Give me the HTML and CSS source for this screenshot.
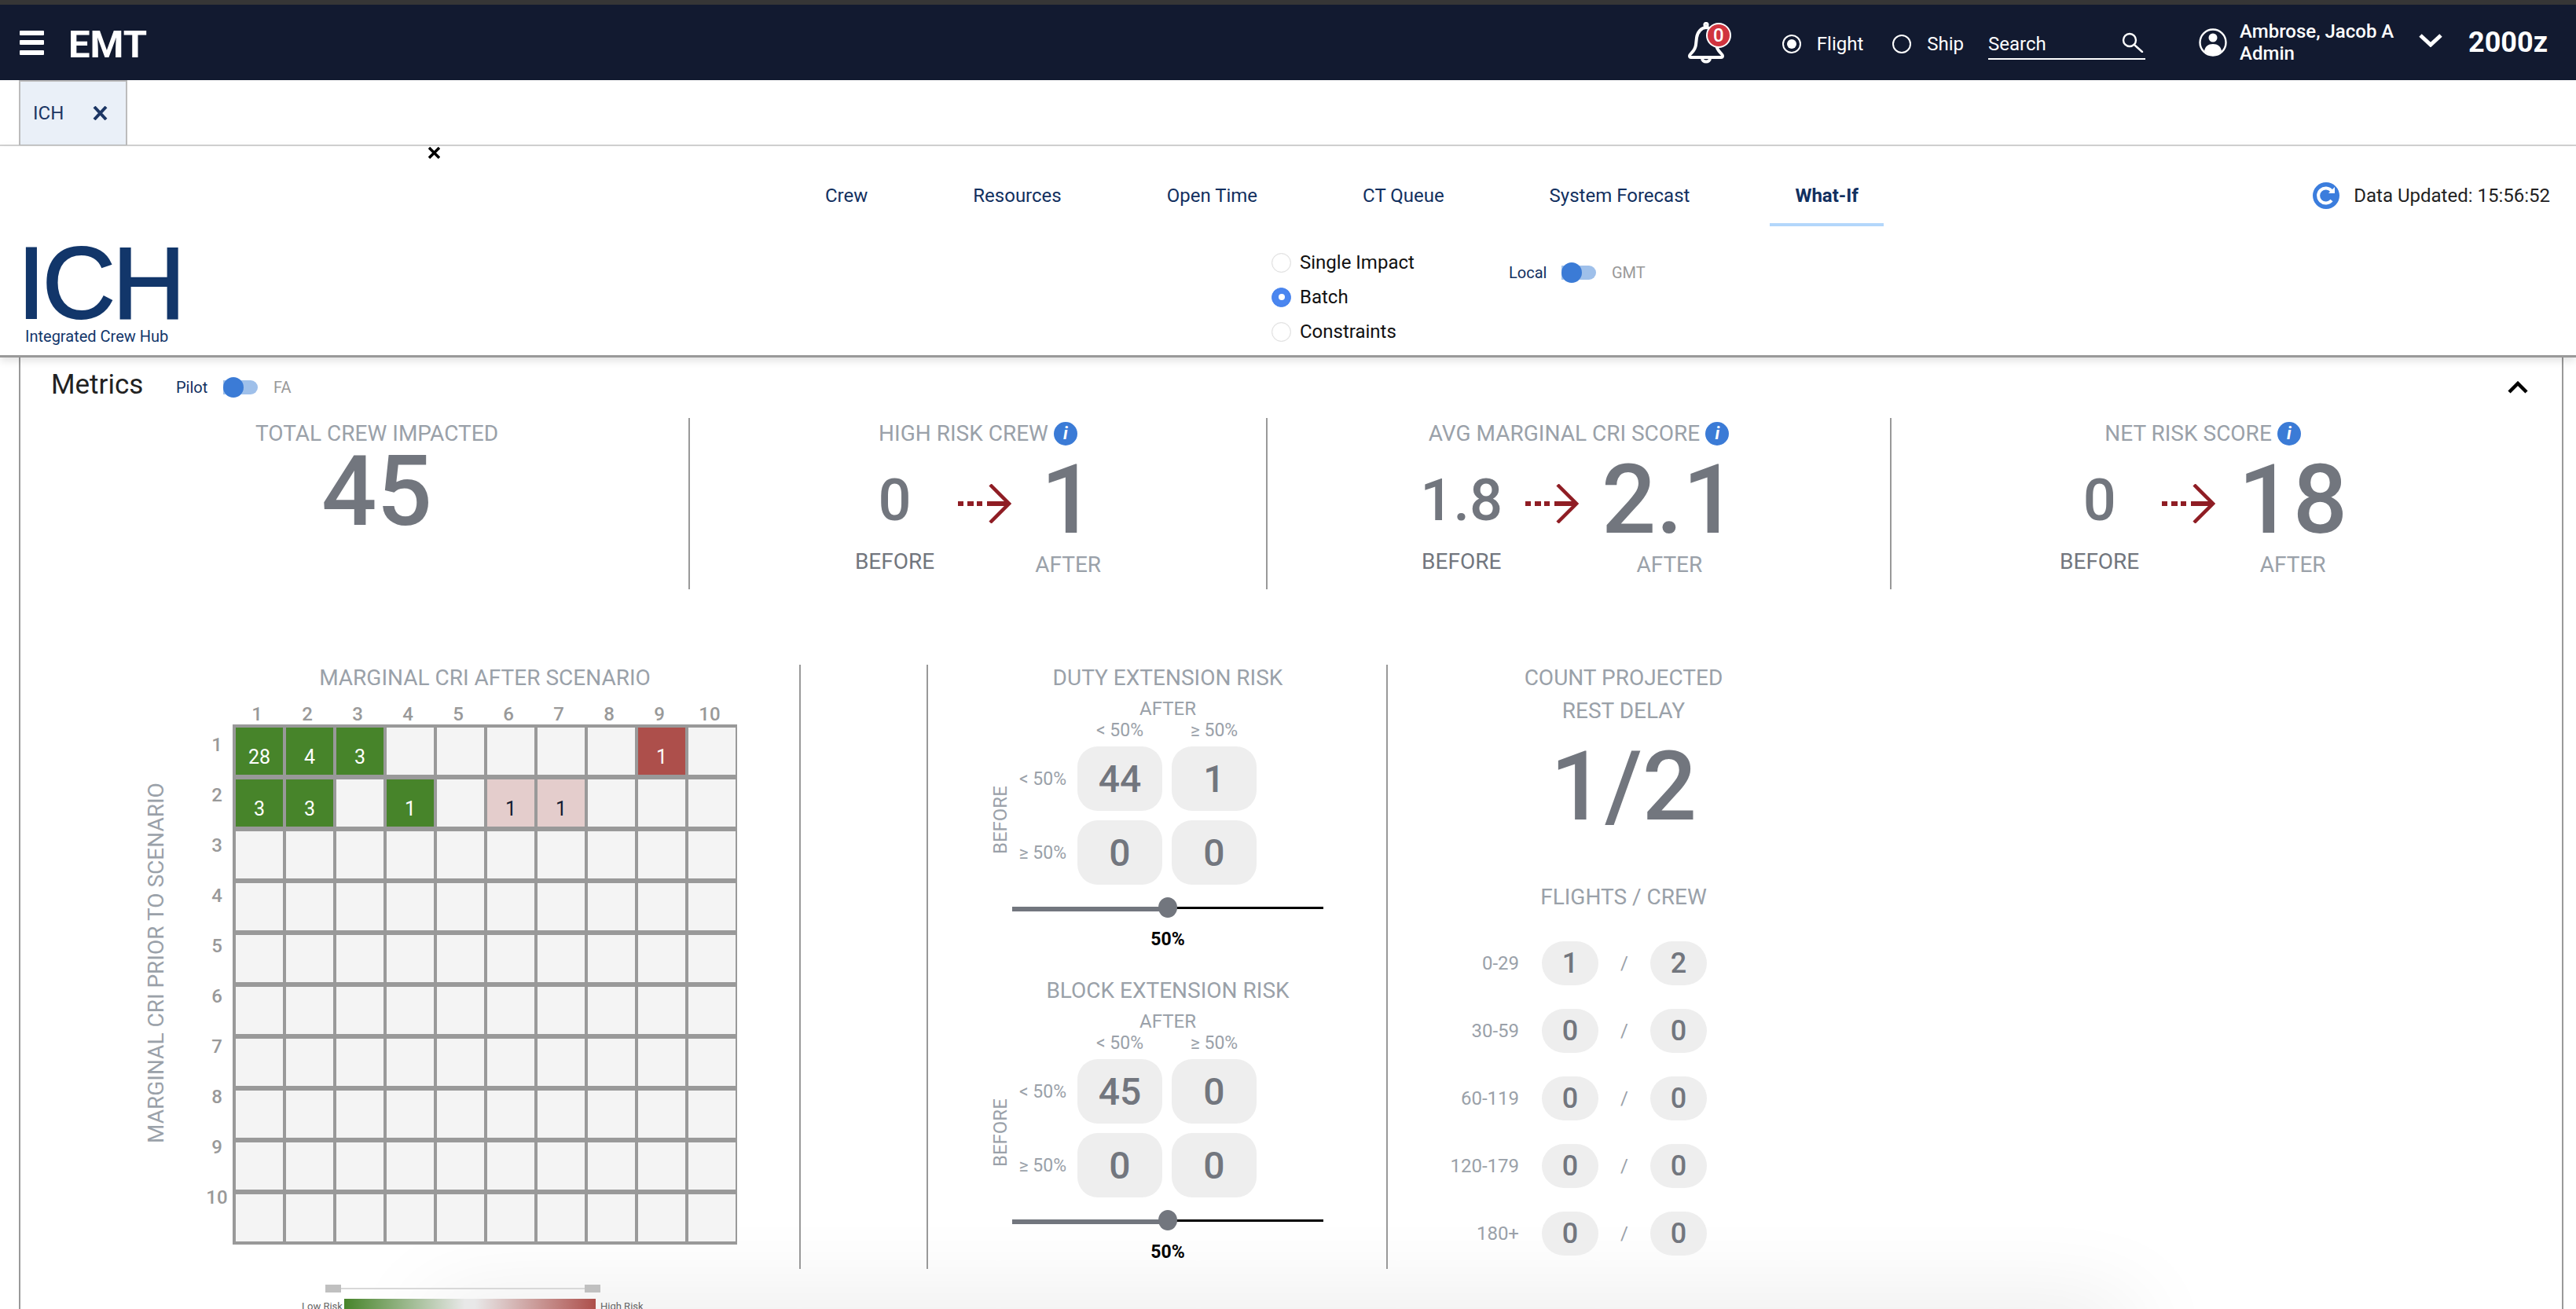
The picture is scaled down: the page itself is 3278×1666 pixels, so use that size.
FILE: index.html
```html
<!DOCTYPE html>
<html lang="en">
<head>
    <meta charset="UTF-8">
    <meta name="viewport" content="width=device-width, initial-scale=1.0">
    <title>ICH - What-If</title>
    <link rel="stylesheet" href="styles.css">
</head>
<body>
<div class="top-strip"></div>
<header class="navbar">
    <div class="burger"><span></span><span></span><span></span></div>
    <div class="brand">EMT</div>
    <div class="bell">
        <svg width="48" height="54" viewBox="0 0 48 54" fill="none" stroke="#fff" stroke-width="4" stroke-linejoin="round" stroke-linecap="round">
            <circle cx="24" cy="3.5" r="1.6"/>
            <path d="M3 43c0-3 7-5 8-14l1-9c1-7 6-13 12-13s11 6 12 13l1 9c1 9 8 11 8 14 0 1.500-1 2-2 2H5c-1 0-2-.5-2-2z"/>
            <path d="M19 46c0 6 10 6 10 0"/>
        </svg>
        <span class="bell-badge">0</span>
    </div>
    <label class="nav-radio first"><span class="nav-dot on"></span>Flight</label>
    <label class="nav-radio"><span class="nav-dot"></span>Ship</label>
    <div class="search">
        <span>Search</span>
        <svg width="30" height="26" viewBox="0 0 30 26" fill="none" stroke="#fff" stroke-width="2.4" stroke-linecap="round">
            <circle cx="11" cy="10" r="8"/>
            <path d="M17 16l10 9"/>
        </svg>
    </div>
    <svg class="user-icon" width="36" height="36" viewBox="0 0 36 36">
        <circle cx="18" cy="18" r="16.500" fill="none" stroke="#fff" stroke-width="2.400"/>
        <circle cx="18" cy="12" r="5.500" fill="#fff"/>
        <path d="M7 29c1-6 5-9 11-9s10 3 11 9c-3 3-7 5-11 5s-8-2-11-5z" fill="#fff"/>
    </svg>
    <div class="user-name">Ambrose, Jacob A<br>Admin</div>
    <svg class="user-chevron" width="30" height="18" viewBox="0 0 30 18" fill="none" stroke="#fff" stroke-width="5">
        <path d="M2 3l13 12L28 3"/>
    </svg>
    <div class="clock">2000z</div>
</header>

<div class="tabs">
    <div class="tab">
        <span>ICH</span>
        <svg width="19" height="18" viewBox="0 0 19 18" stroke="#1c3664" stroke-width="4"><path d="M2 1l15 16M17 1L2 17"/></svg>
    </div>
</div>

<section class="page-head">
    <svg class="stray-close" width="15" height="15" viewBox="0 0 15 15" stroke="#000" stroke-width="3.500"><path d="M1 1l13 13M14 1L1 14"/></svg>
    <div class="page-nav">
        <a class="nav-item">Crew</a>
        <a class="nav-item">Resources</a>
        <a class="nav-item">Open Time</a>
        <a class="nav-item">CT Queue</a>
        <a class="nav-item">System Forecast</a>
        <a class="nav-item active">What-If</a>
        <div class="updated">
            <svg width="34" height="34" viewBox="0 0 34 34">
                <circle cx="17" cy="17" r="17" fill="#3b7ddd"/>
                <path d="M24 11a9.500 9.500 0 1 0 0 12" fill="none" stroke="#fff" stroke-width="4"/>
                <path d="M20 14h8V6z" fill="#fff"/>
            </svg>
            <span>Data Updated: 15:56:52</span>
        </div>
    </div>
    <div class="page-body">
        <div class="logo">
            <div class="logo-big">ICH</div>
            <div class="logo-small">Integrated Crew Hub</div>
        </div>
        <div class="mode-list">
            <label class="mode"><span class="mode-dot"></span>Single Impact</label>
            <label class="mode"><span class="mode-dot on"></span>Batch</label>
            <label class="mode"><span class="mode-dot"></span>Constraints</label>
        </div>
        <div class="switch time-switch">
            <span class="switch-on">Local</span>
            <span class="toggle"><span class="toggle-knob"></span></span>
            <span class="switch-off">GMT</span>
        </div>
    </div>
</section>

<main class="metrics">
    <div class="metrics-head">
        <h2>Metrics</h2>
        <div class="switch">
            <span class="switch-on">Pilot</span>
            <span class="toggle"><span class="toggle-knob"></span></span>
            <span class="switch-off">FA</span>
        </div>
        <svg class="collapse" width="26" height="16" viewBox="0 0 26 16" fill="none" stroke="#000" stroke-width="4.500"><path d="M2 14L13 3l11 11"/></svg>
    </div>

    <div class="kpis">
        <div class="kpi kpi-a">
            <div class="kpi-title">TOTAL CREW IMPACTED</div>
            <div class="kpi-total">45</div>
        </div>
        <div class="kpi kpi-b">
            <div class="kpi-title">HIGH RISK CREW <span class="info">i</span></div>
            <div class="compare">
                <div class="side side-before"><div class="before-num">0</div><div class="before-text">BEFORE</div></div>
                <svg class="arrow" width="68" height="50" viewBox="0 0 68 50" fill="none" stroke="#8f1d24"><path d="M0 25h7M12 25h8M24 25h7M37 25h28" stroke-width="6"/><path d="M41 1l24 24-24 24" stroke-width="4.500"/></svg>
                <div class="side side-after"><div class="after-num">1</div><div class="after-text">AFTER</div></div>
            </div>
        </div>
        <div class="kpi kpi-c">
            <div class="kpi-title">AVG MARGINAL CRI SCORE <span class="info">i</span></div>
            <div class="compare">
                <div class="side side-before"><div class="before-num">1.8</div><div class="before-text">BEFORE</div></div>
                <svg class="arrow" width="68" height="50" viewBox="0 0 68 50" fill="none" stroke="#8f1d24"><path d="M0 25h7M12 25h8M24 25h7M37 25h28" stroke-width="6"/><path d="M41 1l24 24-24 24" stroke-width="4.500"/></svg>
                <div class="side side-after"><div class="after-num">2.1</div><div class="after-text">AFTER</div></div>
            </div>
        </div>
        <div class="kpi kpi-d">
            <div class="kpi-title">NET RISK SCORE <span class="info">i</span></div>
            <div class="compare">
                <div class="side side-before"><div class="before-num">0</div><div class="before-text">BEFORE</div></div>
                <svg class="arrow" width="68" height="50" viewBox="0 0 68 50" fill="none" stroke="#8f1d24"><path d="M0 25h7M12 25h8M24 25h7M37 25h28" stroke-width="6"/><path d="M41 1l24 24-24 24" stroke-width="4.500"/></svg>
                <div class="side side-after"><div class="after-num">18</div><div class="after-text">AFTER</div></div>
            </div>
        </div>
    </div>

    <div class="lower">
        <div class="heat">
            <div class="heat-title">MARGINAL CRI AFTER SCENARIO</div>
            <div class="heat-cols">
                <span>1</span><span>2</span><span>3</span><span>4</span><span>5</span><span>6</span><span>7</span><span>8</span><span>9</span><span>10</span>
            </div>
            <div class="heat-side">MARGINAL CRI PRIOR TO SCENARIO</div>
            <div class="heat-rows">
                <span>1</span><span>2</span><span>3</span><span>4</span><span>5</span><span>6</span><span>7</span><span>8</span><span>9</span><span>10</span>
            </div>
            <div class="heat-wrap">
                <div class="heat-grid">
                    <div class="cell green">28</div><div class="cell green">4</div><div class="cell green">3</div><div class="cell"></div><div class="cell"></div><div class="cell"></div><div class="cell"></div><div class="cell"></div><div class="cell red">1</div><div class="cell"></div>
                    <div class="cell green">3</div><div class="cell green">3</div><div class="cell"></div><div class="cell green">1</div><div class="cell"></div><div class="cell pink">1</div><div class="cell pink">1</div><div class="cell"></div><div class="cell"></div><div class="cell"></div>
                    <div class="cell"></div><div class="cell"></div><div class="cell"></div><div class="cell"></div><div class="cell"></div><div class="cell"></div><div class="cell"></div><div class="cell"></div><div class="cell"></div><div class="cell"></div>
                    <div class="cell"></div><div class="cell"></div><div class="cell"></div><div class="cell"></div><div class="cell"></div><div class="cell"></div><div class="cell"></div><div class="cell"></div><div class="cell"></div><div class="cell"></div>
                    <div class="cell"></div><div class="cell"></div><div class="cell"></div><div class="cell"></div><div class="cell"></div><div class="cell"></div><div class="cell"></div><div class="cell"></div><div class="cell"></div><div class="cell"></div>
                    <div class="cell"></div><div class="cell"></div><div class="cell"></div><div class="cell"></div><div class="cell"></div><div class="cell"></div><div class="cell"></div><div class="cell"></div><div class="cell"></div><div class="cell"></div>
                    <div class="cell"></div><div class="cell"></div><div class="cell"></div><div class="cell"></div><div class="cell"></div><div class="cell"></div><div class="cell"></div><div class="cell"></div><div class="cell"></div><div class="cell"></div>
                    <div class="cell"></div><div class="cell"></div><div class="cell"></div><div class="cell"></div><div class="cell"></div><div class="cell"></div><div class="cell"></div><div class="cell"></div><div class="cell"></div><div class="cell"></div>
                    <div class="cell"></div><div class="cell"></div><div class="cell"></div><div class="cell"></div><div class="cell"></div><div class="cell"></div><div class="cell"></div><div class="cell"></div><div class="cell"></div><div class="cell"></div>
                    <div class="cell"></div><div class="cell"></div><div class="cell"></div><div class="cell"></div><div class="cell"></div><div class="cell"></div><div class="cell"></div><div class="cell"></div><div class="cell"></div><div class="cell"></div>
                </div>
                <div class="legend">
                    <div class="legend-range"><span class="legend-handle"></span><span class="legend-line"></span><span class="legend-handle"></span></div>
                    <div class="legend-scale"><span class="legend-low">Low Risk</span><span class="legend-bar"></span><span>High Risk</span></div>
                </div>
            </div>
        </div>

        <div class="gap-col"></div>

        <div class="risk-col">
            <div class="risk">
                <div class="block-title">DUTY EXTENSION RISK</div>
                <div class="risk-after">AFTER</div>
                <div class="risk-grid">
                    <span></span><span></span><span class="risk-head">&lt; 50%</span><span class="risk-head">≥ 50%</span>
                    <span class="risk-before">BEFORE</span>
                    <span class="risk-label">&lt; 50%</span><div class="risk-box">44</div><div class="risk-box">1</div>
                    <span class="risk-label">≥ 50%</span><div class="risk-box">0</div><div class="risk-box">0</div>
                </div>
                <div class="slider"><span class="slider-fill"></span><span class="slider-rest"></span><span class="slider-knob"></span></div>
                <div class="slider-value">50%</div>
            </div>
            <div class="risk">
                <div class="block-title">BLOCK EXTENSION RISK</div>
                <div class="risk-after">AFTER</div>
                <div class="risk-grid">
                    <span></span><span></span><span class="risk-head">&lt; 50%</span><span class="risk-head">≥ 50%</span>
                    <span class="risk-before">BEFORE</span>
                    <span class="risk-label">&lt; 50%</span><div class="risk-box">45</div><div class="risk-box">0</div>
                    <span class="risk-label">≥ 50%</span><div class="risk-box">0</div><div class="risk-box">0</div>
                </div>
                <div class="slider"><span class="slider-fill"></span><span class="slider-rest"></span><span class="slider-knob"></span></div>
                <div class="slider-value">50%</div>
            </div>
        </div>

        <div class="rest-col">
            <div class="block-title">COUNT PROJECTED</div>
            <div class="block-title rest-second">REST DELAY</div>
            <div class="rest-total">1/2</div>
            <div class="block-title flights-title">FLIGHTS / CREW</div>
            <div class="flight-row"><span class="flight-label">0-29</span><span class="pill">1</span><span class="flight-slash">/</span><span class="pill">2</span></div>
            <div class="flight-row"><span class="flight-label">30-59</span><span class="pill">0</span><span class="flight-slash">/</span><span class="pill">0</span></div>
            <div class="flight-row"><span class="flight-label">60-119</span><span class="pill">0</span><span class="flight-slash">/</span><span class="pill">0</span></div>
            <div class="flight-row"><span class="flight-label">120-179</span><span class="pill">0</span><span class="flight-slash">/</span><span class="pill">0</span></div>
            <div class="flight-row"><span class="flight-label">180+</span><span class="pill">0</span><span class="flight-slash">/</span><span class="pill">0</span></div>
        </div>
    </div>
</main>
<div class="bottom-shade"></div>
</body>
</html>
```

FILE: styles.css
```css
* {
    box-sizing: border-box;
}
html, body {
    margin: 0;
    padding: 0;
    height: 1666px;
    overflow: hidden;
}
body {
    position: relative;
    font-family: Roboto, "Liberation Sans", sans-serif;
    background: #fff;
    color: #222;
}

/* top bar */
.top-strip {
    height: 6px;
    background: #363636;
}
.navbar {
    height: 96px;
    background: #121a30;
    color: #fff;
    display: flex;
    align-items: center;
    padding: 0 36px 0 25px;
    font-size: 24px;
}
.burger {
    display: flex;
    flex-direction: column;
    gap: 6.500px;
    width: 31px;
}
.burger span {
    height: 6px;
    background: #fff;
    border-radius: 1px;
}
.brand {
    margin-left: 31px;
    font-size: 49px;
    font-weight: 700;
    line-height: 1;
    margin-top: 4px;
}
.bell {
    position: relative;
    margin-left: auto;
    width: 48px;
    height: 54px;
    margin-top: 2px;
}
.bell svg {
    display: block;
}
.bell-badge {
    position: absolute;
    left: 26px;
    top: 3px;
    width: 28px;
    height: 28px;
    border-radius: 50%;
    background: #d0343f;
    box-shadow: 0 0 0 2px #fff;
    font-size: 24px;
    font-weight: 500;
    line-height: 28px;
    text-align: center;
}
.nav-radio {
    display: flex;
    align-items: center;
    gap: 20px;
    margin-left: 37px;
    margin-top: 4px;
}
.nav-radio.first {
    margin-left: 73px;
}
.nav-dot {
    width: 24px;
    height: 24px;
    border: 2px solid #fff;
    border-radius: 50%;
    position: relative;
}
.nav-dot.on::after {
    content: "";
    position: absolute;
    left: 4px;
    top: 4px;
    width: 12px;
    height: 12px;
    background: #fff;
    border-radius: 50%;
}
.search {
    width: 200px;
    height: 38px;
    margin-left: 31px;
    margin-top: 6px;
    border-bottom: 2px solid #fff;
    display: flex;
    justify-content: space-between;
    align-items: flex-start;
    padding-right: 1px;
    line-height: 36px;
}
.search svg {
    margin-top: 3px;
}
.user-icon {
    margin-left: 68px;
}
.user-name {
    margin-left: 16px;
    width: 196px;
    font-weight: 500;
    line-height: 28px;
    white-space: nowrap;
}
.user-chevron {
    margin-left: 32px;
    margin-top: -6px;
}
.clock {
    margin-left: 33px;
    font-size: 36px;
    font-weight: 700;
}

/* tab row */
.tabs {
    height: 84px;
    background: #fff;
    border-bottom: 2px solid #d3d3d3;
    padding-left: 24px;
}
.tab {
    width: 138px;
    height: 83px;
    background: #eaf0f8;
    border: 2px solid #bcbcbc;
    border-bottom-width: 1px;
    display: flex;
    align-items: center;
    padding-left: 16px;
    gap: 37px;
    color: #1c3664;
    font-size: 24px;
}

/* page head */
.page-head {
    position: relative;
    z-index: 2;
    height: 269px;
    background: #fff;
    border-bottom: 3px solid #999;
    box-shadow: 0 4px 10px rgba(0, 0, 0, 0.12);
}
.stray-close {
    position: absolute;
    left: 545px;
    top: 1px;
}
.page-nav {
    display: flex;
    gap: 70px;
    padding: 26px 33px 0 1018px;
}
.nav-item {
    height: 76px;
    padding: 0 32px;
    line-height: 74px;
    border-bottom: 4px solid transparent;
    font-size: 24px;
    color: #12305f;
}
.nav-item.active {
    font-weight: 700;
    border-bottom-color: #b3d7fb;
}
.updated {
    margin-left: auto;
    display: flex;
    align-items: center;
    gap: 18px;
    height: 74px;
    font-size: 24px;
}
.page-body {
    display: flex;
}
.logo {
    width: 1618px;
    padding: 25px 0 0 22px;
    color: #12366a;
}
.logo-big {
    font-family: "Liberation Sans", Arial, sans-serif;
    font-size: 129px;
    line-height: 94px;
    letter-spacing: -4px;
    -webkit-text-stroke: 2px #12366a;
}
.logo-small {
    font-size: 20px;
    line-height: 24px;
    margin: 9px 0 0 10px;
}
.mode-list {
    width: 302px;
    padding-top: 24px;
}
.mode {
    display: flex;
    align-items: center;
    gap: 11px;
    height: 44px;
    font-size: 24px;
    color: #111;
}
.mode-dot {
    width: 25px;
    height: 25px;
    border: 1px solid #ddd;
    border-radius: 50%;
    background: #fff;
    box-shadow: inset 0 0 2px rgba(0, 0, 0, 0.08);
    display: flex;
    align-items: center;
    justify-content: center;
}
.mode-dot.on {
    background: #4a86f0;
    border-color: #4a86f0;
}
.mode-dot.on::after {
    content: "";
    width: 8px;
    height: 8px;
    background: #fff;
    border-radius: 50%;
}
.switch {
    display: flex;
    align-items: center;
    font-size: 20px;
}
.time-switch {
    align-self: flex-start;
    margin-top: 46px;
    height: 26px;
}
.switch-on {
    color: #12305f;
    width: 67px;
}
.switch-off {
    color: #999;
    margin-left: 20px;
}
.toggle {
    display: block;
    position: relative;
    width: 44px;
    height: 18px;
    border-radius: 0 9px 9px 0;
    background: #9fc0ea;
}
.toggle-knob {
    position: absolute;
    left: 0;
    top: -4px;
    width: 26px;
    height: 26px;
    border-radius: 50%;
    background: #3b7bd6;
}

/* metrics panel */
.metrics {
    position: relative;
    z-index: 1;
    margin: 0 16px 0 24px;
    height: 1211px;
    border-left: 2px solid #999;
    border-right: 2px solid #999;
}
.metrics-head {
    display: flex;
    align-items: center;
    height: 77px;
    padding: 0 43px 9px 39px;
}
.metrics-head h2 {
    margin: 0;
    width: 159px;
    font-size: 35px;
    font-weight: 400;
    color: #222;
}
.metrics-head .switch {
    margin-top: 8px;
}
.metrics-head .switch-on {
    width: 60px;
}
.collapse {
    margin-left: auto;
    margin-top: 8px;
}
.kpis {
    display: flex;
    height: 218px;
    padding-left: 57px;
}
.kpi {
    padding-top: 5px;
    border-right: 2px solid #999;
    text-align: center;
}
.kpi-a { width: 795px; }
.kpi-b { width: 735px; }
.kpi-c { width: 794px; }
.kpi-d { width: 792px; border-right: none; }
.kpi-title {
    height: 30px;
    font-size: 28px;
    line-height: 30px;
    color: #9aa1a9;
    white-space: nowrap;
}
.info {
    display: inline-block;
    width: 30px;
    height: 30px;
    border-radius: 50%;
    background: #3b7bd6;
    color: #fff;
    font-size: 22px;
    font-style: italic;
    font-weight: 700;
    line-height: 30px;
    vertical-align: top;
}
.kpi-total {
    font-size: 124px;
    font-weight: 500;
    line-height: 124px;
    margin-top: -3px;
    color: #72767e;
}
.compare {
    display: flex;
    justify-content: center;
    gap: 30px;
}
.kpi-c .compare, .kpi-d .compare {
    gap: 29px;
}
.kpi-d .compare {
    padding-left: 2px;
}
.side {
    display: flex;
    flex-direction: column;
    align-items: center;
}
.before-num, .after-num {
    height: 100px;
    line-height: 100px;
    margin-top: 20px;
    color: #72767e;
    font-weight: 500;
}
.before-num {
    font-size: 74px;
}
.after-num {
    font-size: 122px;
}
.before-text, .after-text {
    font-size: 28px;
    line-height: 30px;
}
.before-text {
    margin-top: 13px;
    color: #72767e;
}
.after-text {
    margin-top: 17px;
    color: #9aa1a9;
}
.arrow {
    margin-top: 49px;
}

/* lower part */
.lower {
    display: flex;
    margin-top: 96px;
    height: 769px;
}
.heat {
    width: 993px;
    border-right: 2px solid #999;
    padding-left: 158px;
    display: grid;
    grid-template-columns: 30px 82px 642px;
    grid-template-rows: 46px 30px 1fr;
    align-content: start;
}
.heat-title {
    grid-column: 3;
    font-size: 28px;
    line-height: 34px;
    color: #9aa1a9;
    text-align: center;
    white-space: nowrap;
}
.heat-cols {
    grid-column: 3;
    display: flex;
    margin-left: -1px;
}
.heat-cols span {
    width: 64px;
    text-align: center;
    font-size: 24px;
    font-weight: 500;
    line-height: 34px;
    color: #999;
}
.heat-side {
    grid-column: 1;
    grid-row: 3;
    align-self: start;
    margin-top: 75px;
    height: 458px;
    writing-mode: vertical-rl;
    transform: rotate(180deg);
    font-size: 28px;
    line-height: 30px;
    text-align: center;
    color: #9aa1a9;
    white-space: nowrap;
}
.heat-rows {
    grid-column: 2;
    grid-row: 3;
    width: 32px;
    margin: -6px 0 0 46px;
}
.heat-rows span {
    display: block;
    height: 64px;
    line-height: 64px;
    text-align: center;
    font-size: 24px;
    font-weight: 500;
    color: #999;
}
.heat-wrap {
    grid-column: 3;
    grid-row: 3;
}
.heat-grid {
    display: grid;
    grid-template-columns: repeat(10, 60px);
    grid-auto-rows: 60px;
    gap: 6px 4px;
    width: 642px;
    padding: 4px 2px 4px 4px;
    background: #999;
}
.cell {
    background: #f4f4f4;
    display: flex;
    align-items: center;
    justify-content: center;
    padding-top: 14px;
    font-size: 25px;
}
.cell.green {
    background: #47842a;
    color: #fff;
}
.cell.red {
    background: #ad4f4b;
    color: #fff;
}
.cell.pink {
    background: #e4cdcc;
    color: #121a30;
}
.legend {
    margin: 51px 0 0 88px;
    width: 440px;
}
.legend-range {
    display: flex;
    align-items: center;
    margin-left: 30px;
    width: 350px;
    height: 10px;
}
.legend-handle {
    width: 20px;
    height: 10px;
    background: #c0c0c0;
}
.legend-line {
    flex: 1;
    height: 2px;
    background: #d8d8d8;
}
.legend-scale {
    display: flex;
    align-items: flex-start;
    margin-top: 8px;
    font-size: 13px;
    line-height: 20px;
    color: #666;
    white-space: nowrap;
}
.legend-low {
    width: 54px;
    flex: none;
}
.legend-bar {
    flex: none;
    width: 320px;
    height: 30px;
    margin-right: 6px;
    background: linear-gradient(to right, #47842a, #e8e8e8 48%, #e8e8e8 52%, #ad4f4b);
}
.gap-col {
    width: 162px;
    border-right: 2px solid #999;
}
.risk-col {
    width: 585px;
    border-right: 2px solid #999;
    padding-left: 107px;
}
.risk {
    width: 396px;
    height: 398px;
}
.block-title {
    padding-top: 2px;
    font-size: 28px;
    line-height: 30px;
    color: #9aa1a9;
    text-align: center;
    white-space: nowrap;
}
.risk-after {
    margin-top: 12px;
    font-size: 24px;
    line-height: 24px;
    text-align: center;
    color: #9aa1a9;
}
.risk-grid {
    display: grid;
    grid-template-columns: 20px 64px 108px 108px;
    grid-template-rows: 20px 82px 82px;
    gap: 12px;
    margin: 4px 0 0 -25px;
    width: 324px;
}
.risk-head {
    text-align: center;
    font-size: 23px;
    line-height: 24px;
    color: #9aa1a9;
}
.risk-before {
    grid-row: 2 / 4;
    writing-mode: vertical-rl;
    transform: rotate(180deg);
    text-align: center;
    padding-bottom: 12px;
    font-size: 24px;
    line-height: 20px;
    color: #9aa1a9;
}
.risk-label {
    text-align: right;
    padding-right: 2px;
    font-size: 23px;
    line-height: 84px;
    color: #9aa1a9;
}
.risk-box {
    border-radius: 26px;
    background: #eee;
    text-align: center;
    font-size: 48px;
    font-weight: 500;
    line-height: 84px;
    color: #72767e;
}
.slider {
    position: relative;
    display: flex;
    align-items: flex-start;
    margin-top: 28px;
    height: 6px;
}
.slider-fill {
    width: 198px;
    height: 6px;
    background: #72767e;
}
.slider-rest {
    width: 198px;
    height: 2.500px;
    background: #000;
}
.slider-knob {
    position: absolute;
    left: 186px;
    top: -12px;
    width: 24px;
    height: 26px;
    border-radius: 50%;
    background: #72767e;
}
.slider-value {
    margin-top: 24px;
    font-size: 23px;
    font-weight: 700;
    line-height: 24px;
    text-align: center;
    color: #000;
}
.rest-col {
    width: 600px;
}
.rest-second {
    margin-top: 10px;
}
.rest-total {
    margin-top: 21px;
    font-size: 122px;
    font-weight: 500;
    line-height: 122px;
    text-align: center;
    color: #72767e;
}
.flights-title {
    margin-top: 62px;
    margin-bottom: 41px;
}
.flight-row {
    display: flex;
    align-items: center;
    height: 56px;
    margin-bottom: 30px;
}
.flight-label {
    width: 167px;
    margin-right: 29px;
    text-align: right;
    font-size: 24px;
    color: #9aa1a9;
}
.flight-slash {
    width: 66px;
    text-align: center;
    font-size: 24px;
    color: #9aa1a9;
}
.pill {
    width: 72px;
    height: 56px;
    border-radius: 28px;
    background: #eee;
    text-align: center;
    font-size: 36px;
    font-weight: 500;
    line-height: 56px;
    color: #72767e;
}

/* soft shadow rising from below the window */
.bottom-shade {
    position: absolute;
    z-index: 0;
    left: 560px;
    top: 1680px;
    width: 2140px;
    height: 40px;
    box-shadow: 0 0 120px 10px rgba(0, 0, 0, 0.13);
    pointer-events: none;
}
```
